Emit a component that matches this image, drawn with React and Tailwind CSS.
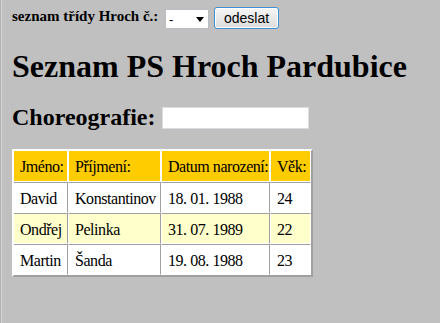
import React from "react";

const serif = { fontFamily: '"Liberation Serif", "Times New Roman", serif' };

const rows = [
  ["David", "Konstantinov", "18. 01. 1988", "24", "bg-white"],
  ["Ondřej", "Pelinka", "31. 07. 1989", "22", "bg-[#ffffcc]"],
  ["Martin", "Šanda", "19. 08. 1988", "23", "bg-white"],
];

export default function App() {
  return (
    <div
      className="w-[440px] h-[323px] bg-[#c0c0c0] text-black overflow-hidden shadow-[inset_1px_0_#b2b2b2,inset_2px_0_#d4d4d4] font-['Liberation_Serif',serif]"
      style={serif}
    >
      <div className="flex items-start pl-3 pt-[7px]">
        <span className="w-[153px] text-[15px] leading-[18px] font-bold whitespace-nowrap">
          seznam třídy Hroch č.:
        </span>
        <div className="mt-[2px] w-[44px] h-[20px] bg-white border border-[#b9bec4] flex items-center justify-between pl-[3px] pr-[4px] font-['Liberation_Sans',sans-serif] text-[13px]">
          <span className="leading-none">-</span>
          <svg width="8" height="5" viewBox="0 0 8 5">
            <path d="M0 0 L8 0 L4 5 Z" fill="#000" />
          </svg>
        </div>
        <div className="ml-[5px] w-[65px] h-[22px] rounded-[3px] border border-[#3f8fd2] bg-gradient-to-b from-[#f6f6f6] to-[#dcdcdc] shadow-[inset_0_0_0_1px_#ffffff] flex items-center justify-center font-['Liberation_Sans',sans-serif] text-[14px] leading-none pb-[1px]">
          odeslat
        </div>
      </div>

      <h1 className="mt-[19px] pl-3 text-[32px] leading-[36px] font-bold whitespace-nowrap">
        Seznam PS Hroch Pardubice
      </h1>

      <div className="mt-[19px] flex items-center pl-3">
        <h2 className="text-[24px] leading-[28px] font-bold whitespace-nowrap w-[150px]">
          Choreografie:
        </h2>
        <div className="mt-[2px] w-[147px] h-[22px] bg-white border border-[#d9dde2]" />
      </div>

      <div className="mt-[18px] pl-3">
        <table className="border-separate border-spacing-0 border-2 border-t-white border-l-white border-r-[#a0a0a0] border-b-[#a0a0a0] bg-white text-[16px] tracking-[-0.45px]">
          <thead>
            <tr>
              {[
                ["Jméno:", "w-[53px]", ""],
                ["Příjmení:", "w-[91px]", "border-l border-l-white"],
                ["Datum narození:", "w-[107px]", "border-l border-l-white"],
                ["Věk:", "w-[39px]", "border-l border-l-white"],
              ].map(([t, w, l]) => (
                <th
                  key={t}
                  className={`p-0 font-normal text-left bg-[#ffcc00] border-b border-b-white border-r border-r-white ${l}`}
                >
                  <div className={`${w} h-[30px] flex items-center pl-[6px] pt-[2px] whitespace-nowrap leading-[18px]`}>
                    {t}
                  </div>
                </th>
              ))}
            </tr>
          </thead>
          <tbody>
            {rows.map((r) => (
              <tr key={r[0]} className={r[4]}>
                <td className="p-0 border-t border-t-[#a0a0a0] border-b border-b-white border-r border-r-[#a0a0a0]">
                  <div className="w-[53px] h-[29px] flex items-center pl-[6px] pt-[2px] whitespace-nowrap leading-[18px]">{r[0]}</div>
                </td>
                <td className="p-0 border-t border-t-[#a0a0a0] border-b border-b-white border-l border-l-white border-r border-r-[#a0a0a0]">
                  <div className="w-[91px] h-[29px] flex items-center pl-[6px] pt-[2px] whitespace-nowrap leading-[18px]">{r[1]}</div>
                </td>
                <td className="p-0 border-t border-t-[#a0a0a0] border-b border-b-white border-l border-l-white border-r border-r-[#a0a0a0]">
                  <div className="w-[107px] h-[29px] flex items-center pl-[6px] pt-[2px] whitespace-nowrap leading-[18px]">{r[2]}</div>
                </td>
                <td className="p-0 border-t border-t-[#a0a0a0] border-b border-b-white border-l border-l-white border-r border-r-white">
                  <div className="w-[39px] h-[29px] flex items-center pl-[6px] pt-[2px] whitespace-nowrap leading-[18px]">{r[3]}</div>
                </td>
              </tr>
            ))}
          </tbody>
        </table>
      </div>
    </div>
  );
}
